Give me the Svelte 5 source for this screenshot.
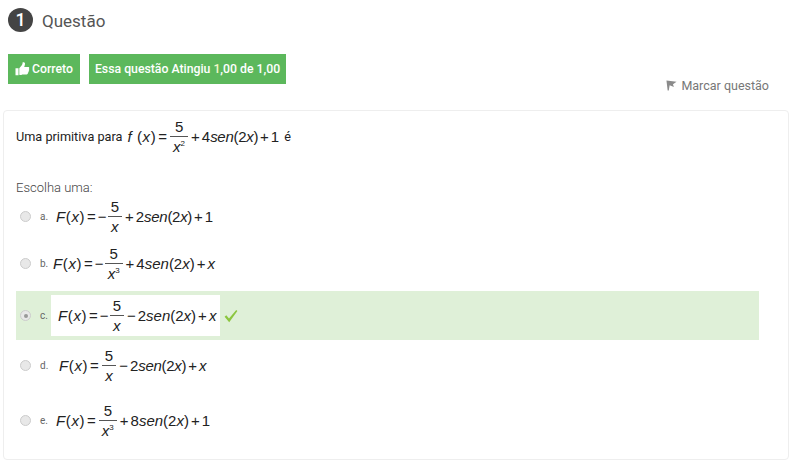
<script lang="ts">
	type Part = string | { num: string; den: string; sup?: string };

	const op = (s: string) => `<span class="op">${s}</span>`;
	const sen = (n: string) => `${n}<span class="fn"><i>sen</i>(2<i>x</i>)</span>`;
	const lhs = `<span class="lhs"><i>F</i>(<i>x</i>)</span>${op('=')}`;

	const question: Part[] = [
		`<span class="lhs"><i>f</i> (<i>x</i>)</span>${op('=')}`,
		{ num: '5', den: 'x', sup: '2' },
		`${op('+')}${sen('4')}${op('+')}1`
	];

	const options: { letter: string; parts: Part[]; cls: string; correct?: boolean }[] = [
		{
			letter: 'a.',
			cls: 'opt-a',
			parts: [lhs + '−', { num: '5', den: 'x' }, `${op('+')}${sen('2')}${op('+')}1`]
		},
		{
			letter: 'b.',
			cls: 'opt-b',
			parts: [lhs + '−', { num: '5', den: 'x', sup: '3' }, `${op('+')}${sen('4')}${op('+')}<i>x</i>`]
		},
		{
			letter: 'c.',
			cls: 'opt-c',
			correct: true,
			parts: [lhs + '−', { num: '5', den: 'x' }, `${op('−')}${sen('2')}${op('+')}<i>x</i>`]
		},
		{
			letter: 'd.',
			cls: 'opt-d',
			parts: [lhs, { num: '5', den: 'x' }, `${op('−')}${sen('2')}${op('+')}<i>x</i>`]
		},
		{
			letter: 'e.',
			cls: 'opt-e',
			parts: [lhs, { num: '5', den: 'x', sup: '3' }, `${op('+')}${sen('8')}${op('+')}1`]
		}
	];
</script>

{#snippet formula(parts: Part[])}
	<span class="formula">
		{#each parts as part}
			{#if typeof part === 'string'}
				<span class="run">{@html part}</span>
			{:else}
				<span class="frac">
					<span class="num">{part.num}</span>
					<span class="den"><i>{part.den}</i>{#if part.sup}<sup>{part.sup}</sup>{/if}</span>
				</span>
			{/if}
		{/each}
	</span>
{/snippet}

<div class="page">
	<header class="head">
		<span class="badge">1</span>
		<h3>Questão</h3>
	</header>

	<div class="status">
		<span class="tag tag-result">
			<svg viewBox="0 0 15 14" width="15" height="14" aria-hidden="true">
				<path d="M0.500 6.200h3v7h-3z M4.300 6.300 7 3c.5-.7.6-1.500.6-2.500 0-.6 2.300-.6 2.400 1 .1 1.100-.3 2.500-.8 3.400h3.900c1.300 0 1.500 1.500.7 2 .7.600.5 1.700-.2 2 .3.800 0 1.500-.7 1.800.2.900-.3 1.700-1.300 1.700H7.200C6 13.400 5.200 13 4.300 12.800z" fill="#fff" />
			</svg>
			<span>Correto</span>
		</span>
		<span class="tag"><span>Essa questão Atingiu <b>1</b>,00 de 1,00</span></span>
	</div>

	<div class="flag-row">
		<svg viewBox="0 0 12 13" width="11" height="12" aria-hidden="true">
			<path d="M0.500 1.500 11.500 3 7.600 5.600 8.600 8.600 4 6.800 3 12.500 1.800 12.500z" fill="#8b8b8b" />
		</svg>
		<span>Marcar questão</span>
	</div>

	<section class="card">
		<div class="prompt">
			<span class="prompt-text">Uma primitiva para</span>
			{@render formula(question)}
			<span class="prompt-text">é</span>
		</div>

		<p class="choose">Escolha uma:</p>

		<div class="options">
			{#each options as opt}
				<div class="option {opt.cls}" class:correct={opt.correct}>
					<span class="radio" class:checked={opt.correct}></span>
					<span class="letter">{opt.letter}</span>
					<span class="answer">{@render formula(opt.parts)}</span>
					{#if opt.correct}
						<svg class="check" viewBox="0 0 14 14" width="14" height="14" aria-hidden="true">
							<path d="M0.600 7.800 2.300 6.300 5 9.600 12.200 1 13.400 1.900 5.200 13.200z" fill="#8cc63f" />
						</svg>
					{/if}
				</div>
			{/each}
		</div>
	</section>
</div>

<style>
	:global(body) {
		margin: 0;
		background: #fff;
		font-family: Roboto, sans-serif;
		color: #555;
	}

	:global(.op) {
		margin: 0 2px;
	}

	:global(.lhs) {
		letter-spacing: 0.6px;
	}

	:global(.fn) {
		letter-spacing: -0.3px;
	}

	.opt-b :global(.fn),
	.opt-c :global(.fn),
	.opt-e :global(.fn) {
		letter-spacing: 0;
	}

	.page {
		width: 791px;
		height: 461px;
		overflow: hidden;
		padding-top: 8px;
		box-sizing: border-box;
	}

	.head {
		display: flex;
		align-items: center;
		gap: 9px;
		padding-left: 8px;
		height: 24px;
	}

	.badge {
		width: 25px;
		height: 24px;
		border-radius: 50%;
		background: #444;
		color: #fff;
		font-size: 18px;
		font-weight: 500;
		line-height: 24px;
		text-align: center;
	}

	h3 {
		margin: 0;
		font-size: 17px;
		font-weight: 400;
		color: #555;
		position: relative;
		top: 1px;
	}

	.status {
		display: flex;
		gap: 9px;
		margin: 22px 0 0 8px;
	}

	.tag {
		display: flex;
		align-items: center;
		height: 30px;
		padding: 0 6px;
		background: #5cb85c;
		color: #fff;
		font-size: 12.25px;
		font-weight: 500;
		white-space: pre;
	}

	.tag-result {
		gap: 2px;
		padding: 0 7px;
	}

	.tag b {
		font-weight: 500;
		color: #f4f7c8;
	}

	.flag-row {
		display: flex;
		align-items: center;
		gap: 4px;
		justify-content: flex-end;
		height: 16px;
		margin-top: -7px;
		padding-right: 22px;
		font-size: 12.5px;
		color: #777;
	}

	.card {
		margin: 17px 2px 0 3px;
		height: 350px;
		box-sizing: border-box;
		border: 1px solid #eee;
		border-radius: 4px;
		padding: 0 29px 0 12px;
	}

	.prompt {
		display: flex;
		align-items: center;
		gap: 5px;
		height: 52px;
		font-size: 12.7px;
		margin-top: -1px;
	}

	.prompt-text {
		font-weight: 400;
		color: #222;
	}

	.choose {
		margin: 19px 0 0;
		font-size: 13px;
		font-weight: 300;
		line-height: 14px;
		color: #444;
	}

	.options {
		display: flex;
		flex-direction: column;
		margin-top: 1px;
	}

	.option {
		display: flex;
		align-items: center;
		padding-left: 4px;
		height: 49px;
		font-size: 10px;
		color: #666;
	}

	.option.correct {
		background: #dff0d8;
	}

	.opt-a {
		height: 40px;
	}

	.opt-b {
		height: 55px;
	}

	.opt-d {
		height: 50px;
	}

	.opt-e {
		height: 60px;
	}

	.radio {
		width: 9px;
		height: 9px;
		border-radius: 50%;
		border: 1px solid #ccc;
		background: #e8e8e8;
		display: flex;
		align-items: center;
		justify-content: center;
		margin-right: 9px;
		flex: none;
	}

	.radio.checked::after {
		content: '';
		width: 4px;
		height: 4px;
		border-radius: 50%;
		background: #999;
	}

	.letter {
		width: 11px;
		flex: none;
	}

	.answer {
		display: flex;
		align-items: center;
		padding: 0 2px 0 5px;
	}

	.opt-b .answer {
		padding-left: 2px;
	}

	.opt-c .answer {
		background: #fff;
		height: 41px;
		width: 169px;
		box-sizing: border-box;
		padding-left: 7px;
	}

	.opt-d .answer {
		padding-left: 8px;
	}

	.check {
		margin-left: 4px;
	}

	.formula {
		display: inline-flex;
		align-items: center;
		font-family: 'Liberation Sans', Arial, sans-serif;
		font-size: 15px;
		color: #222;
		white-space: pre;
	}

	.frac {
		display: inline-flex;
		flex-direction: column;
		align-items: center;
		line-height: 17px;
		font-size: 15px;
		margin: 0 1px;
	}

	.num {
		padding: 0 3px 1px;
	}

	.den {
		border-top: 1px solid #555;
		padding: 1px 3px 0;
		align-self: stretch;
		text-align: center;
	}

	.den sup {
		font-size: 8px;
		line-height: 0;
		vertical-align: 6px;
	}
</style>
